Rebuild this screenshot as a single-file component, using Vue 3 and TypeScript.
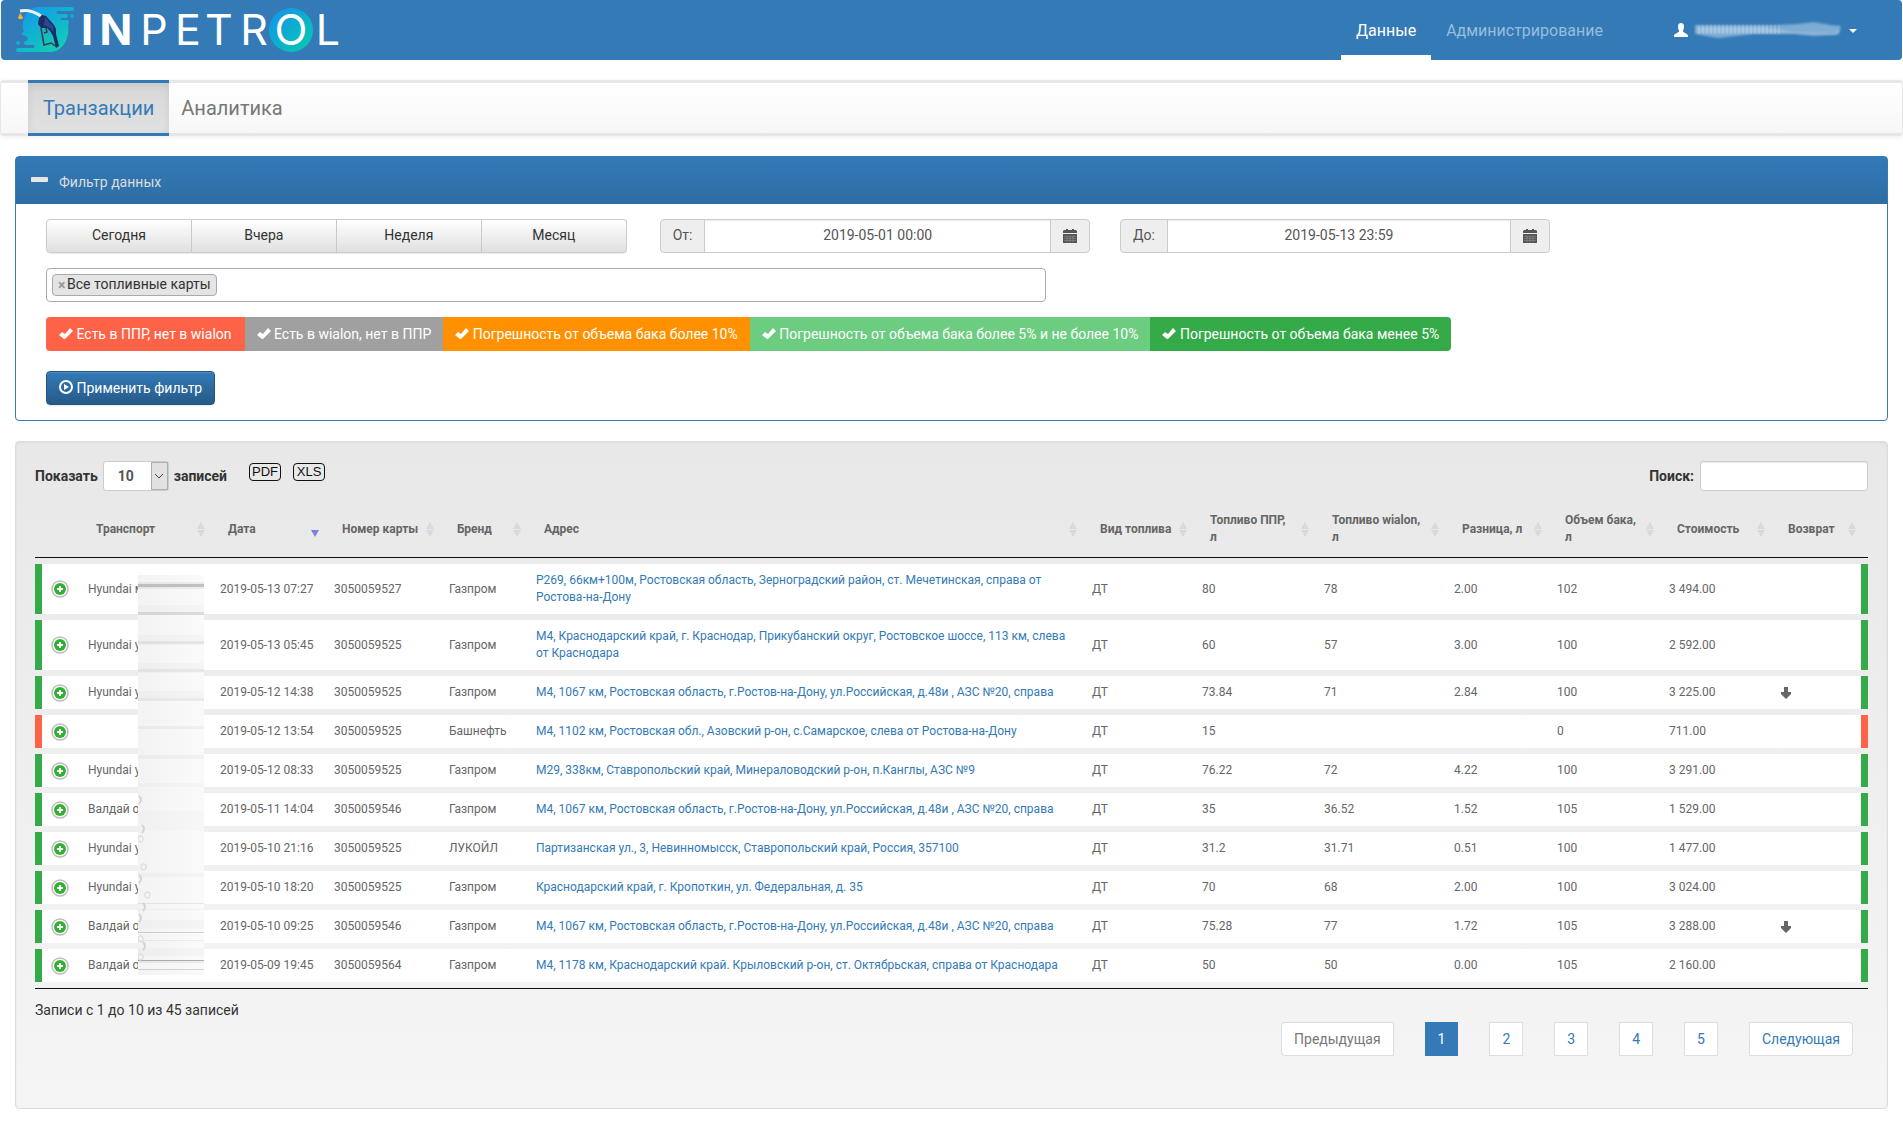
<script setup lang="ts">
import { ref } from 'vue'

interface Transaction {
  id: number
  status: 'ok' | 'missing'
  transport: string
  date: string
  card: string
  brand: string
  address: string
  fuel: string
  ppr: string
  wialon: string
  diff: string
  tank: string
  cost: string
  refund: boolean
}

const periods = ['Сегодня', 'Вчера', 'Неделя', 'Месяц']

const categories = [
  { id: 'missing', label: 'Есть в ППР, нет в wialon' },
  { id: 'extra', label: 'Есть в wialon, нет в ППР' },
  { id: 'high', label: 'Погрешность от объема бака более 10%' },
  { id: 'medium', label: 'Погрешность от объема бака более 5% и не более 10%' },
  { id: 'low', label: 'Погрешность от объема бака менее 5%' },
]

const columns = [
  { id: 'transport', label: 'Транспорт' },
  { id: 'date', label: 'Дата' },
  { id: 'card', label: 'Номер карты' },
  { id: 'brand', label: 'Бренд' },
  { id: 'address', label: 'Адрес' },
  { id: 'fuel', label: 'Вид топлива' },
  { id: 'ppr', label: 'Топливо ППР,\nл' },
  { id: 'wialon', label: 'Топливо wialon,\nл' },
  { id: 'diff', label: 'Разница, л' },
  { id: 'tank', label: 'Объем бака,\nл' },
  { id: 'cost', label: 'Стоимость' },
  { id: 'refund', label: 'Возврат' },
]

const m4Rostov = 'М4, 1067 км, Ростовская область, г.Ростов-на-Дону, ул.Российская, д.48и , АЗС №20, справа'

const rows: Transaction[] = [
  { id: 1, status: 'ok', transport: 'Hyundai м', date: '2019-05-13 07:27', card: '3050059527', brand: 'Газпром', address: 'Р269, 66км+100м, Ростовская область, Зерноградский район, ст. Мечетинская, справа от Ростова-на-Дону', fuel: 'ДТ', ppr: '80', wialon: '78', diff: '2.00', tank: '102', cost: '3 494.00', refund: false },
  { id: 2, status: 'ok', transport: 'Hyundai у', date: '2019-05-13 05:45', card: '3050059525', brand: 'Газпром', address: 'М4, Краснодарский край, г. Краснодар, Прикубанский округ, Ростовское шоссе, 113 км, слева от Краснодара', fuel: 'ДТ', ppr: '60', wialon: '57', diff: '3.00', tank: '100', cost: '2 592.00', refund: false },
  { id: 3, status: 'ok', transport: 'Hyundai у', date: '2019-05-12 14:38', card: '3050059525', brand: 'Газпром', address: m4Rostov, fuel: 'ДТ', ppr: '73.84', wialon: '71', diff: '2.84', tank: '100', cost: '3 225.00', refund: true },
  { id: 4, status: 'missing', transport: '', date: '2019-05-12 13:54', card: '3050059525', brand: 'Башнефть', address: 'М4, 1102 км, Ростовская обл., Азовский р-он, с.Самарское, слева от Ростова-на-Дону', fuel: 'ДТ', ppr: '15', wialon: '', diff: '', tank: '0', cost: '711.00', refund: false },
  { id: 5, status: 'ok', transport: 'Hyundai у', date: '2019-05-12 08:33', card: '3050059525', brand: 'Газпром', address: 'М29, 338км, Ставропольский край, Минераловодский р-он, п.Канглы, АЗС №9', fuel: 'ДТ', ppr: '76.22', wialon: '72', diff: '4.22', tank: '100', cost: '3 291.00', refund: false },
  { id: 6, status: 'ok', transport: 'Валдай о', date: '2019-05-11 14:04', card: '3050059546', brand: 'Газпром', address: m4Rostov, fuel: 'ДТ', ppr: '35', wialon: '36.52', diff: '1.52', tank: '105', cost: '1 529.00', refund: false },
  { id: 7, status: 'ok', transport: 'Hyundai у', date: '2019-05-10 21:16', card: '3050059525', brand: 'ЛУКОЙЛ', address: 'Партизанская ул., 3, Невинномысск, Ставропольский край, Россия, 357100', fuel: 'ДТ', ppr: '31.2', wialon: '31.71', diff: '0.51', tank: '100', cost: '1 477.00', refund: false },
  { id: 8, status: 'ok', transport: 'Hyundai у', date: '2019-05-10 18:20', card: '3050059525', brand: 'Газпром', address: 'Краснодарский край, г. Кропоткин, ул. Федеральная, д. 35', fuel: 'ДТ', ppr: '70', wialon: '68', diff: '2.00', tank: '100', cost: '3 024.00', refund: false },
  { id: 9, status: 'ok', transport: 'Валдай о', date: '2019-05-10 09:25', card: '3050059546', brand: 'Газпром', address: m4Rostov, fuel: 'ДТ', ppr: '75.28', wialon: '77', diff: '1.72', tank: '105', cost: '3 288.00', refund: true },
  { id: 10, status: 'ok', transport: 'Валдай о', date: '2019-05-09 19:45', card: '3050059564', brand: 'Газпром', address: 'М4, 1178 км, Краснодарский край. Крыловский р-он, ст. Октябрьская, справа от Краснодара', fuel: 'ДТ', ppr: '50', wialon: '50', diff: '0.00', tank: '105', cost: '2 160.00', refund: false },
]

const streaks = [
  { y: 7, h: 7, o: 0.05 },
  { y: 9, h: 3, o: 0.18 },
  { y: 30, h: 10, o: 0.02 },
  { y: 37, h: 3, o: 0.1 },
  { y: 60, h: 10, o: 0.02 },
  { y: 66, h: 3, o: 0.06 },
  { y: 88, h: 10, o: 0.02 },
  { y: 94, h: 3, o: 0.05 },
  { y: 116, h: 10, o: 0.02 },
  { y: 123, h: 3, o: 0.04 },
  { y: 151, h: 3, o: 0.04 },
  { y: 180, h: 4, o: 0.03 },
  { y: 208, h: 4, o: 0.02 },
  { y: 236, h: 20, o: 0.01 },
  { y: 298, h: 4, o: 0.02 },
  { y: 328, h: 1, o: 0.07 },
  { y: 334, h: 1, o: 0.03 },
  { y: 345, h: 9, o: 0.02 },
  { y: 357, h: 1, o: 0.16 },
  { y: 365, h: 1, o: 0.05 },
  { y: 373, h: 8, o: 0.02 },
  { y: 385, h: 1, o: 0.3 },
  { y: 386, h: 2, o: 0.06 },
  { y: 394, h: 1, o: 0.14 },
]

// Leftover curls along the left edge of the masked area
const curls = [
  { x: 1, y: 225 },
  { x: 4, y: 254 },
  { x: 1, y: 304 },
  { x: 5, y: 332 },
  { x: 1, y: 343 },
  { x: 5, y: 371 },
]

const dots = [
  { x: 2, y: 263 },
  { x: 5, y: 291 },
  { x: 9, y: 319 },
  { x: 2, y: 363 },
  { x: 2, y: 381 },
]

const pages = [1, 2, 3, 4, 5]
const page = ref(1)
const dateFrom = ref('2019-05-01 00:00')
const dateTo = ref('2019-05-13 23:59')
const pageSize = ref('10')
const query = ref('')
</script>

<template>
  <div class="page">
    <header class="navbar">
      <a class="brand" href="#" aria-label="INPETROL">
        <svg width="344" height="60" viewBox="0 0 344 60">
          <defs>
            <linearGradient id="aqua" x1="0" y1="0" x2="1" y2="1">
              <stop offset="0" stop-color="#1590f0" />
              <stop offset="1" stop-color="#06ccac" />
            </linearGradient>
            <linearGradient id="blob" gradientUnits="userSpaceOnUse" x1="30" y1="8" x2="58" y2="52">
              <stop offset="0" stop-color="#149aea" />
              <stop offset="1" stop-color="#0fd0b4" />
            </linearGradient>
          </defs>
          <g transform="translate(-1 0)">
            <path d="M38 7H72a2 2 0 0 1 0 4H58c-2 0-2 3 0 3H66a2 2 0 0 1 0 4H62c-2 0-2 2 0 2H67a2 2 0 0 1 0 4H68C70 40 62 52 50 52H18a2 2 0 0 1 0-4H33c2 0 2-3 0-3H26a2 2 0 0 1 0-4H26C28 40 29 37 25 36c-4-1-4-4-1-4C20 22 26 8 38 7Z" fill="url(#blob)" />
            <circle cx="72" cy="16" r="2" fill="#16a5dc" />
            <circle cx="18" cy="43" r="2" fill="#16a5dc" />
            <path d="M20 11C29 9 35 12 41 16" fill="none" stroke="#eef0f2" stroke-width="3" />
            <path d="M20 13c2 3 3 4 3 5a3 3 0 0 1-5 0c0-1 1-2 2-5Z" fill="#f5b52a" />
            <path d="M39 18L42 15L46 16L54 25L56 29L56 34L59 46L56 48L53 36L50 31L47 28L41 28L38 24Z" fill="#1d2e63" />
            <path d="M45 17L53 26L54 32L50 28L44 25Z" fill="#2a4796" />
            <path d="M41 28L44 45L51 43L57 47M46 28L47 32L44 33" fill="none" stroke="#45393a" stroke-width="1.5" />
            <circle cx="291" cy="30" r="22" fill="url(#aqua)" />
            <text class="wordmark" y="45"><tspan class="heavy" x="87 116">IN</tspan><tspan x="154 188 219 254 291 328">PETROL</tspan></text>
          </g>
        </svg>
      </a>
      <nav class="main-nav">
        <a class="nav-link active" href="#">Данные</a>
        <a class="nav-link" href="#">Администрирование</a>
      </nav>
      <button class="user" type="button" aria-label="Профиль">
        <svg width="14" height="14" viewBox="0 0 14 14">
          <path d="M7 0c2 0 3 1 3 4 0 2-1 3-1 4 0 2 5 2 5 5v1H0v-1c0-3 5-3 5-5 0-1-1-2-1-4 0-3 1-4 3-4Z" fill="#fff" />
        </svg>
        <svg width="148" height="20" viewBox="0 0 148 20">
          <defs>
            <pattern id="hatch" width="4" height="20" patternUnits="userSpaceOnUse">
              <rect width="2" height="20" fill="#fff" opacity="0.14" />
            </pattern>
            <filter id="soft" x="-5%" y="-20%" width="110%" height="140%"><feGaussianBlur stdDeviation="1" /></filter>
          </defs>
          <path d="M1 5H84L104 4L120 2L136 5L147 6L145 14L120 16L100 14L60 14L24 18L1 14Z" fill="#7facd5" filter="url(#soft)" />
          <path d="M3 7H70L100 12L140 13L146 9L142 15L100 13L40 13L3 13Z" fill="#a9c8e4" opacity="0.6" filter="url(#soft)" />
          <path d="M2 5H88V14H2Z" fill="url(#hatch)" />
        </svg>
        <span class="caret"></span>
      </button>
    </header>

    <nav class="sub-nav">
      <a class="tab active" href="#">Транзакции</a>
      <a class="tab" href="#">Аналитика</a>
    </nav>

    <section class="panel">
      <h2 class="panel-heading">
        <svg width="18" height="16" viewBox="0 0 18 16"><rect x="0" y="5" width="17" height="5" rx="1" fill="#e6e6e6" /></svg>
        Фильтр данных
      </h2>
      <form class="panel-body" @submit.prevent>
        <div class="filter-grid">
          <div class="periods">
            <button v-for="p in periods" :key="p" type="button">{{ p }}</button>
          </div>
          <div class="date-group">
            <label for="from">От:</label>
            <input id="from" v-model="dateFrom" type="text">
            <button type="button" aria-label="Календарь">
              <svg class="calendar" width="14" height="15" viewBox="0 0 14 15">
                <path d="M1 1H3V0H5V1H9V0H11V1H13L14 2V4H0V2Z" fill="#555" />
                <path d="M0 5H14V14H0Z" fill="#555" />
                <path d="M1 7h12M1 9h12M1 11h12M4 6v7M7 6v7M10 6v7" stroke="#999" stroke-width="0.5" transform="translate(0 .5)" />
              </svg>
            </button>
          </div>
          <div class="date-group">
            <label for="to">До:</label>
            <input id="to" v-model="dateTo" type="text">
            <button type="button" aria-label="Календарь">
              <svg class="calendar" width="14" height="15" viewBox="0 0 14 15">
                <path d="M1 1H3V0H5V1H9V0H11V1H13L14 2V4H0V2Z" fill="#555" />
                <path d="M0 5H14V14H0Z" fill="#555" />
                <path d="M1 7h12M1 9h12M1 11h12M4 6v7M7 6v7M10 6v7" stroke="#999" stroke-width="0.5" transform="translate(0 .5)" />
              </svg>
            </button>
          </div>
        </div>
        <div class="multi">
          <span class="chip"><button type="button" aria-label="Удалить">×</button>Все топливные карты</span>
          <input type="text" aria-label="Топливные карты">
        </div>
        <div class="categories">
          <button v-for="c in categories" :key="c.id" type="button" :class="c.id" aria-pressed="true">
            <svg width="14" height="12" viewBox="0 0 14 12"><path d="M0 7L3 4L6 6L11 0L14 3L6 11L5 11Z" fill="#fff" /></svg> {{ c.label }}
          </button>
        </div>
        <button class="apply" type="submit">
          <svg width="14" height="14" viewBox="0 0 14 14">
            <circle cx="7" cy="7" r="6" fill="none" stroke="#fff" stroke-width="2" />
            <path d="M5 4L10 7L5 10Z" fill="#fff" />
          </svg> Применить фильтр
        </button>
      </form>
    </section>

    <section class="well">
      <div class="toolbar">
        <label class="length" for="size">Показать
          <span class="select-box">
            <select id="size" v-model="pageSize">
              <option>10</option>
              <option>25</option>
              <option>50</option>
            </select>
            <span class="select-arrow">
              <svg width="10" height="6" viewBox="0 0 10 6"><path d="M1 1L5 5L9 1" fill="none" stroke="#444" stroke-width="1" /></svg>
            </span>
          </span>
          записей</label>
        <button v-for="f in ['PDF', 'XLS']" :key="f" class="export" type="button">{{ f }}</button>
        <label class="search" for="search">Поиск:<input id="search" v-model="query" type="search"></label>
      </div>

      <div class="table-wrap">
        <table>
          <colgroup>
            <col class="c-toggle">
            <col v-for="c in columns" :key="c.id" :class="'c-' + c.id">
          </colgroup>
          <thead>
            <tr>
              <th></th>
              <th v-for="c in columns" :key="c.id">
                <div class="head">
                  <span>{{ c.label }}</span>
                  <svg width="19" height="19" viewBox="0 0 19 19">
                    <path v-if="c.id === 'date'" d="M6 10H14L10 17Z" fill="#7b80e0" />
                    <path v-else d="M6 9H14L10 2ZM6 10H14L10 17Z" fill="#d9d9d9" />
                  </svg>
                </div>
              </th>
            </tr>
          </thead>
          <tbody>
            <tr v-for="r in rows" :key="r.id" :class="r.status">
              <td class="toggle">
                <button type="button" aria-label="Подробнее">
                  <svg width="18" height="18" viewBox="0 0 18 18">
                    <circle cx="9" cy="9" r="8" fill="#fff" stroke="#bdbdbd" stroke-width="1.5" />
                    <circle cx="9" cy="9" r="6" fill="#31b131" />
                    <path d="M9 6V12M6 9H12" stroke="#fff" stroke-width="2" />
                  </svg>
                </button>
              </td>
              <td>{{ r.transport }}</td>
              <td>{{ r.date }}</td>
              <td>{{ r.card }}</td>
              <td>{{ r.brand }}</td>
              <td><a href="#">{{ r.address }}</a></td>
              <td>{{ r.fuel }}</td>
              <td>{{ r.ppr }}</td>
              <td>{{ r.wialon }}</td>
              <td>{{ r.diff }}</td>
              <td>{{ r.tank }}</td>
              <td>{{ r.cost }}</td>
              <td>
                <svg v-if="r.refund" class="down" width="12" height="12" viewBox="0 0 12 12"><path d="M4 0H8V5H11V7L6 12L1 7V5H4Z" fill="#666" /></svg>
              </td>
            </tr>
          </tbody>
        </table>
        <svg class="smudge" width="66" height="400" viewBox="0 0 66 400">
          <defs>
            <linearGradient id="mist" x1="0" y1="0" x2="1" y2="0">
              <stop offset="0" stop-color="#f3f3f3" />
              <stop offset="1" stop-color="#fafafa" />
            </linearGradient>
          </defs>
          <rect width="66" height="400" fill="url(#mist)" />
          <rect v-for="s in streaks" :key="s.y" :y="s.y" width="66" :height="s.h" fill="#000" :opacity="s.o" />
          <path v-for="c in curls" :key="'c' + c.y" :d="`M${c.x} ${c.y - 4}q4 4 0 8`" fill="none" stroke="#d8d3cf" stroke-width="2" />
          <rect v-for="d in dots" :key="'d' + d.y" :x="d.x - 2" :y="d.y - 2" width="5" height="6" rx="2" fill="none" stroke="#d9d6d4" />
        </svg>
      </div>

      <p class="info">Записи с 1 до 10 из 45 записей</p>
      <nav class="pagination">
        <button class="prev" type="button" disabled>Предыдущая</button>
        <button v-for="n in pages" :key="n" type="button" :class="{ current: n === page }" @click="page = n">{{ n }}</button>
        <button class="next" type="button">Следующая</button>
      </nav>
    </section>
  </div>
</template>

<style>
body {
  background: #fff;
}
</style>

<style scoped>
.page {
  font-family: Roboto, "Liberation Sans", sans-serif;
  font-size: 14px;
  line-height: 20px;
  color: #333;
  padding-bottom: 20px;
}
.page *, .page *::before {
  box-sizing: border-box;
}
button, input, select {
  font: inherit;
  color: inherit;
  margin: 0;
}
a {
  color: #337ab7;
  text-decoration: none;
}
svg {
  flex: none;
}

.navbar {
  display: flex;
  height: 60px;
  margin: 0 1px;
  border-radius: 4px;
  background: #337ab7;
}
.brand {
  display: block;
  height: 60px;
}
.wordmark {
  font-family: Inter, Lato, sans-serif;
  font-size: 43px;
  font-weight: 400;
  fill: #fff;
  text-anchor: middle;
}
.heavy {
  font-weight: 700;
}
.main-nav {
  display: flex;
  margin-left: auto;
  font-size: 16px;
}
.nav-link {
  padding: 21px 15px 14px;
  color: #99bddb;
  border-bottom: 5px solid transparent;
}
.nav-link.active {
  color: #fff;
  border-bottom-color: #fff;
}
.user {
  display: flex;
  align-items: center;
  gap: 6px;
  margin-left: 41px;
  margin-right: 30px;
  padding: 0 15px;
  border: 0;
  background: none;
}
.caret {
  margin-top: 6px;
  margin-left: 1px;
  border: 4px solid transparent;
  border-top-color: #fff;
}

.sub-nav {
  display: flex;
  margin-top: 20px;
  padding-left: 27px;
  border: solid #e7e7e7;
  border-width: 0 1px;
  border-radius: 4px;
  background: linear-gradient(#e7e7e7 0 3px, #fff 3px, #f7f7f7 53px, #e7e7e7 53px);
  box-shadow: 0 1px 5px rgba(0, 0, 0, 0.08);
  font-size: 20px;
}
.tab {
  padding: 15px 12px;
  border: solid transparent;
  border-width: 3px 0;
  color: #777;
}
.tab.active {
  padding: 15px;
  color: #337ab7;
  border-color: #337ab7;
  background: linear-gradient(#d8d8d8, #e1e1e1);
  box-shadow: inset 0 3px 9px rgba(0, 0, 0, 0.08);
}

.panel {
  margin: 20px 15px 0;
  border: 1px solid #337ab7;
  border-radius: 4px;
}
.panel-heading {
  display: flex;
  align-items: flex-start;
  gap: 10px;
  height: 47px;
  margin: 0;
  padding: 15px 15px 0;
  font-size: 14px;
  font-weight: 400;
  color: #ddd;
  background: linear-gradient(#337ab7, #2e6da4);
}
.panel-body {
  display: flex;
  flex-direction: column;
  align-items: flex-start;
  gap: 15px;
  padding: 15px 30px;
}
.filter-grid {
  display: grid;
  grid-template-columns: repeat(12, 1fr);
  column-gap: 30px;
  width: 100%;
}
.periods {
  grid-column: span 4;
  display: flex;
  margin-right: 3px;
}
.periods button {
  flex: 1;
  height: 34px;
  padding: 0 0 2px;
  border: 1px solid #ccc;
  border-left-width: 0;
  background: linear-gradient(#fff, #e0e0e0);
  box-shadow: 0 1px 1px rgba(0, 0, 0, 0.08);
}
.periods button:first-child {
  border-left-width: 1px;
  border-radius: 4px 0 0 4px;
}
.periods button:last-child {
  border-radius: 0 4px 4px 0;
}
.date-group {
  grid-column: span 3;
  display: flex;
  height: 34px;
  border: 1px solid #ccc;
  border-radius: 4px;
  background: #eee;
  color: #555;
  overflow: hidden;
}
.date-group label {
  padding: 5px 12px;
}
.date-group input {
  flex: 1;
  min-width: 0;
  border: solid #ccc;
  border-width: 0 1px;
  padding: 0 0 2px;
  text-align: center;
  background: #fff;
  box-shadow: inset 0 1px 1px rgba(0, 0, 0, 0.08);
}
.date-group button {
  padding: 0 12px;
  border: 0;
  background: none;
}
.calendar {
  display: block;
}
.multi {
  display: flex;
  align-items: flex-start;
  width: 100%;
  max-width: 1000px;
  height: 34px;
  padding: 5px;
  border: 1px solid #aaa;
  border-radius: 4px;
}
.multi input {
  flex: 1;
  border: 0;
  padding: 0;
  outline: 0;
  background: none;
}
.chip {
  display: flex;
  height: 22px;
  padding: 0 5px;
  border: 1px solid #aaa;
  border-radius: 4px;
  background: #e4e4e4;
  line-height: 18px;
}
.chip button {
  width: 9px;
  padding: 0;
  border: 0;
  background: none;
  color: #999;
  text-align: left;
  font-weight: 700;
}
.categories {
  display: flex;
}
.categories button {
  height: 34px;
  padding: 0 12px;
  border: 0;
  color: #fff;
  white-space: nowrap;
}
.categories svg {
  vertical-align: -1px;
}
.categories button:first-child {
  padding: 0 13px;
  border-radius: 4px 0 0 4px;
}
.categories button:last-child {
  border-radius: 0 4px 4px 0;
}
.categories .missing {
  background: #ff6347;
}
.categories .extra {
  background: #a0a0a0;
}
.categories .high {
  background: #ff9100;
}
.categories .medium {
  background: #6ccc7f;
}
.categories .low {
  background: #34aa49;
}
.apply {
  height: 34px;
  margin-top: 5px;
  padding: 0 12px;
  border: 1px solid #245580;
  border-radius: 4px;
  color: #fff;
  background: linear-gradient(#337ab7, #265a88);
  box-shadow: inset 0 1px 0 rgba(255, 255, 255, 0.15), 0 1px 1px rgba(0, 0, 0, 0.08);
}
.apply svg {
  vertical-align: -1px;
}

.well {
  margin: 20px 15px 0;
  padding: 19px;
  border: 1px solid #dcdcdc;
  border-radius: 4px;
  background: linear-gradient(#e8e8e8, #f5f5f5);
  box-shadow: inset 0 1px 3px rgba(0, 0, 0, 0.05);
}
.toolbar {
  display: flex;
  align-items: flex-start;
  font-weight: 700;
}
.length {
  display: flex;
  align-items: center;
  gap: 5px;
  height: 30px;
  margin-right: 22px;
}
.select-box {
  position: relative;
}
select {
  display: block;
  appearance: none;
  width: 66px;
  height: 30px;
  padding: 0 0 0 14px;
  border: 1px solid #ccc;
  border-radius: 3px;
  background: #fff;
  color: #555;
}
.select-arrow {
  position: absolute;
  top: 1px;
  right: 1px;
  display: flex;
  align-items: center;
  justify-content: center;
  width: 17px;
  height: 28px;
  border: 1px solid #adadad;
  background: #e1e1e1;
  pointer-events: none;
}
.export {
  width: 32px;
  height: 18px;
  margin: 2px 12px 0 0;
  padding: 0;
  border: 1px solid #111;
  border-radius: 4px;
  background: none;
  color: #111;
  font-family: "Liberation Sans", Arial, sans-serif;
  font-size: 13px;
  font-weight: 400;
  line-height: 16px;
}
.search {
  display: flex;
  align-items: center;
  gap: 6px;
  margin-left: auto;
}
.search input {
  width: 168px;
  height: 30px;
  border: 1px solid #ccc;
  border-radius: 3px;
  background: #fff;
  box-shadow: inset 0 1px 1px rgba(0, 0, 0, 0.08);
}

.table-wrap {
  position: relative;
  margin-top: 4px;
}
table {
  width: 100%;
  table-layout: fixed;
  border-collapse: separate;
  border-spacing: 0 6px;
  border-bottom: 1px solid #111;
  font-size: 12px;
  line-height: 17px;
  color: #666;
}
.c-toggle { width: 43px; }
.c-transport { width: 132px; }
.c-date { width: 114px; }
.c-card { width: 115px; }
.c-brand { width: 87px; }
.c-fuel { width: 110px; }
.c-ppr { width: 122px; }
.c-wialon { width: 130px; }
.c-diff { width: 103px; }
.c-tank { width: 112px; }
.c-cost { width: 111px; }
.c-refund { width: 98px; }
th {
  padding: 11px 0 11px 18px;
  border-bottom: 1px solid #111;
  text-align: left;
}
th:last-child {
  padding-right: 7px;
}
.head {
  display: flex;
  align-items: center;
}
.head span {
  flex: 1;
  min-width: 0;
  white-space: pre;
}
td {
  padding: 8px 10px;
  background: #fff;
}
tbody td:first-child {
  border-left: 7px solid #34aa49;
}
tbody td:last-child {
  border-right: 7px solid #34aa49;
}
tbody .missing td {
  border-color: #ff6347;
}
.toggle {
  padding: 0 0 0 9px;
}
.toggle button {
  display: block;
  padding: 0;
  border: 0;
  background: none;
}
.toggle svg, .down {
  display: block;
}
.smudge {
  position: absolute;
  left: 103px;
  top: 80px;
}

.info {
  margin: 11px 0 0;
}
.pagination {
  display: flex;
  justify-content: flex-end;
  gap: 31px;
  margin: 2px 15px 33px 0;
}
.pagination button {
  height: 34px;
  padding: 0 12px 1px;
  border: 1px solid #ddd;
  background: #fff;
  color: #337ab7;
}
.pagination .prev {
  color: #777;
  border-radius: 4px 0 0 4px;
}
.pagination .next {
  border-radius: 0 4px 4px 0;
}
.pagination .current {
  color: #fff;
  border-color: #337ab7;
  background: #337ab7;
}
</style>
